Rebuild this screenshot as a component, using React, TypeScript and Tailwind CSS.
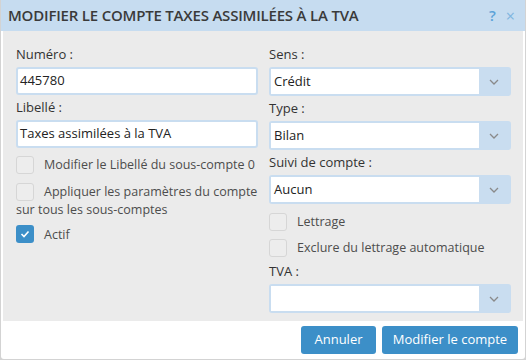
import React from "react";

const font = { fontFamily: '"Open Sans", "Noto Sans", sans-serif' };

function Label({ children }: { children: React.ReactNode }) {
  return (
    <div className="h-[25px] pt-[3px] text-[13px] leading-[18px] text-[#333]">{children}</div>
  );
}

function Input({ value }: { value: string }) {
  return (
    <div className="h-[28px] border-2 border-[#c9ddf0] rounded-[3px] bg-white px-[2px] flex items-center text-[13px] text-[#222]">
      {value}
    </div>
  );
}

function Chevron() {
  return (
    <svg width="10" height="6" viewBox="0 0 10 6" fill="none">
      <polyline points="1,1 5,5 9,1" stroke="#8a8a8a" strokeWidth="1.3" />
    </svg>
  );
}

function Select({ value }: { value: string }) {
  return (
    <div className="h-[29px] border-2 border-[#c9ddf0] rounded-[3px] bg-[#c9ddf0] flex">
      <div className="flex-1 bg-white flex items-center px-[3px] text-[13px] text-[#222]">{value}</div>
      <div className="w-[30px] flex items-center justify-center">
        <Chevron />
      </div>
    </div>
  );
}

function Box({ checked }: { checked?: boolean }) {
  if (checked) {
    return (
      <span className="inline-flex w-[18px] h-[18px] rounded-[3px] bg-[#3c8fc8] items-center justify-center align-middle mr-[10px]">
        <svg width="10" height="8" viewBox="0 0 10 8" fill="none">
          <polyline points="1.5,4 4,6.5 8.5,1.5" stroke="white" strokeWidth="1.6" />
        </svg>
      </span>
    );
  }
  return (
    <span className="inline-block w-[18px] h-[18px] rounded-[3px] border border-[#d6d6d6] bg-[#ededed] align-middle mr-[10px]" />
  );
}

export default function App() {
  return (
    <div className="w-[526px] h-[360px] bg-[#d3d3d3] pl-[1px] pr-[1px] pb-[1px]" style={font}>
      <div className="h-[359px] bg-white flex flex-col rounded-b-[3px]">
        <div className="h-[31px] bg-[#c6dcf0] flex items-center pl-[7px] pr-[10px]">
          <div className="flex-1 text-[15px] font-semibold text-[#3a3a3a] tracking-[-0.2px]">
            MODIFIER LE COMPTE TAXES ASSIMILÉES À LA TVA
          </div>
          <span className="text-[15px] font-semibold text-[#5aa2d8] mr-[10px]">?</span>
          <span className="text-[16px] text-[#7fb5df]">×</span>
        </div>
        <div className="mx-[2px] h-[290px] bg-[#ebebeb] pl-[13px] pr-[12px] pt-[11px] grid grid-cols-2 gap-x-[11px]">
          <div className="flex flex-col">
            <Label>Numéro :</Label>
            <Input value="445780" />
            <Label>Libellé :</Label>
            <Input value="Taxes assimilées à la TVA" />
            <div className="mt-[7px] text-[12.5px] leading-[18px] text-[#4d4d4d] whitespace-nowrap">
              <div className="h-[27px]">
                <Box />
                <span className="align-middle">Modifier le Libellé du sous-compte 0</span>
              </div>
              <div>
                <Box />
                <span className="align-middle">Appliquer les paramètres du compte</span>
                <br />
                sur tous les sous-comptes
              </div>
              <div className="mt-[6px]">
                <Box checked />
                <span className="align-middle">Actif</span>
              </div>
            </div>
          </div>
          <div className="flex flex-col">
            <Label>Sens :</Label>
            <Select value="Crédit" />
            <Label>Type :</Label>
            <Select value="Bilan" />
            <Label>Suivi de compte :</Label>
            <Select value="Aucun" />
            <div className="mt-[8px] text-[12.5px] leading-[18px] text-[#4d4d4d] whitespace-nowrap">
              <div className="h-[26px]">
                <Box />
                <span className="align-middle">Lettrage</span>
              </div>
              <div className="h-[20px]">
                <Box />
                <span className="align-middle">Exclure du lettrage automatique</span>
              </div>
            </div>
            <div className="mt-[1px]">
              <Label>TVA :</Label>
            </div>
            <Select value="" />
          </div>
        </div>
        <div className="flex justify-end gap-[6px] pr-[7px] pt-[5px]">
          <button className="h-[28px] w-[75px] rounded-[3px] bg-[#3c8fc8] text-white text-[13px] font-medium">
            Annuler
          </button>
          <button className="h-[28px] w-[136px] rounded-[3px] bg-[#3c8fc8] text-white text-[13px] font-medium">
            Modifier le compte
          </button>
        </div>
      </div>
    </div>
  );
}
